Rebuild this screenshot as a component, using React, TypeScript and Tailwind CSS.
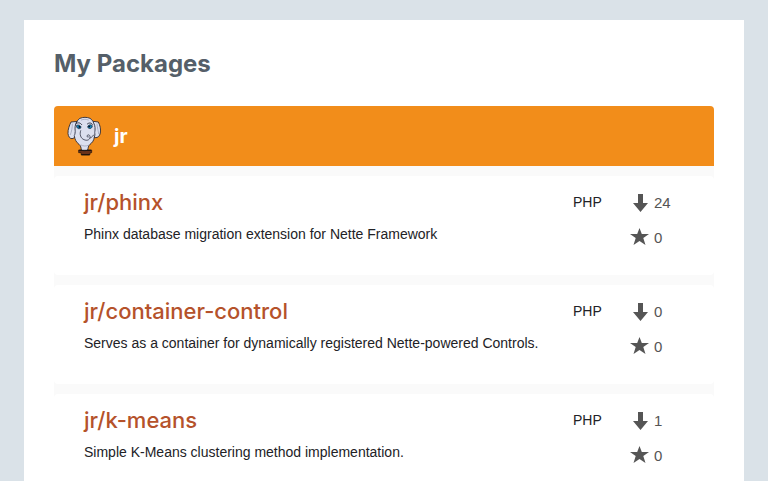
type Package = {
  name: string;
  description: string;
  language: string;
  downloads: number;
  stars: number;
};

const packages: Package[] = [
  { name: "jr/phinx", description: "Phinx database migration extension for Nette Framework", language: "PHP", downloads: 24, stars: 0 },
  { name: "jr/container-control", description: "Serves as a container for dynamically registered Nette-powered Controls.", language: "PHP", downloads: 0, stars: 0 },
  { name: "jr/k-means", description: "Simple K-Means clustering method implementation.", language: "PHP", downloads: 1, stars: 0 },
];

function Elephant() {
  return (
    <svg viewBox="48 48 108 120" className="h-10 w-9 shrink-0" role="img" aria-label="jr avatar">
      <path d="M86 150h39v8h-4l-2 7H94l-1-7h-7z" fill="#6b3219" stroke="#1c100c" strokeWidth="2" />
      <g fill="#dcdfef" stroke="#20212e" strokeWidth="2.5" strokeLinejoin="round" strokeLinecap="round">
        <path d="M84 64L63 66c-4 9-10 22-9 35 1 8 5 15 12 15 6-1 8-4 10-7z" />
        <path d="M122 63l23 3c5 10 8 21 6 33-2 9-7 15-16 14l-7-6z" />
        <path d="M80 66c3-5 6-9 10-11 9-4 21-4 30 0 5 3 9 8 11 14 5 9 5 19 3 28 0 5 1 8-1 14-1 10-6 17-13 22-6 5-5 11-7 17-5 3-14 3-19 0-1-7-1-12-7-17-8-6-13-15-14-26 1-4 3-8 3-13-2-10-1-20 4-28z" />
      </g>
      <g fill="none" stroke="#9297af" strokeWidth="2" strokeLinecap="round">
        <path d="M67 72c0 11-2 22-6 32M76 90c0 6-1 12-3 18M141 72c1 11 4 22 5 29M133 87c0 7 1 12 3 18" />
        <path d="M93 135c6 4 16 4 22 1M94 60c7-3 14-3 21 0" />
      </g>
      <path d="M92 92c-4 11 0 23 10 27 9 4 16 1 18-6 1-6-3-11-8-7-3 3 0 6 3 5M131 105c-4 5-7 8-11 9" fill="none" stroke="#3a3d4f" strokeWidth="2.5" strokeLinecap="round" />
      <path d="M77 72c7-6 14-4 19 3M111 73c5-5 12-6 17 1" fill="none" stroke="#20212e" strokeWidth="2.5" />
      <path d="M79 77c6-4 14-1 14 6-5 6-13 3-14-6zM113 82c0-7 9-10 14-5 0 8-8 12-14 5z" fill="#1582b8" stroke="#101c30" strokeWidth="2" />
      <path d="M86 78h5v5h-5zM115 77h5v5h-5z" fill="#09121e" />
      <path d="M88 151h35M94 164h25" stroke="#17100d" strokeWidth="3" />
    </svg>
  );
}

function DownloadIcon() {
  return (
    <svg viewBox="0 0 20 20" className="size-5 fill-[#555]" aria-hidden="true">
      <path d="M8 1h5v9h5l-7.5 9L3 10h5z" />
    </svg>
  );
}

function StarIcon() {
  return (
    <svg viewBox="0 0 20 20" className="size-5 fill-[#555]" aria-hidden="true">
      <path d="M9.5 0l2.3 6H19l-5.7 4.1 2.2 6.9-6-4.1-6 4.1 2.2-6.9L0 6h7.2z" />
    </svg>
  );
}

export default function App() {
  return (
    <div className="min-h-screen bg-[#dae2e8] px-6 pt-5 font-['Liberation_Sans',Arial,sans-serif] text-sm text-[#222226]">
      <main className="min-h-[calc(100vh-20px)] bg-white p-[30px]">
        <h1 className="mb-7 font-[Inter,sans-serif] text-2xl leading-7 font-bold text-[#555f69]">My Packages</h1>
        <section className="overflow-hidden rounded-t-[4px] bg-[#fafafa]">
          <header className="flex h-[60px] items-center gap-3 bg-[#f28d1a] px-3">
            <Elephant />
            <h2 className="font-[Inter,sans-serif] text-xl font-bold text-white">jr</h2>
          </header>
          <ul className="flex flex-col gap-2.5 pt-2.5">
            {packages.map((item) => (
              <li key={item.name} className="flex items-start rounded-[4px] bg-white px-[30px] pt-3 pb-[27px]">
                <div className="min-w-0 flex-1">
                  <h3 className="mb-2 font-[Inter,sans-serif] text-[22px] leading-7 font-medium">
                    <a href={"#" + item.name} className="text-[#b5522b]">{item.name}</a>
                  </h3>
                  <p className="leading-5">{item.description}</p>
                </div>
                <p className="ml-5 w-[57px] pt-1 leading-5">{item.language}</p>
                <div className="flex w-[54px] flex-col gap-[15px] pt-[5px] text-[15px] leading-5 text-[#555]">
                  <p className="flex items-center gap-1" aria-label="Downloads"><DownloadIcon />{item.downloads}</p>
                  <p className="flex items-center gap-1" aria-label="Stars"><StarIcon />{item.stars}</p>
                </div>
              </li>
            ))}
          </ul>
        </section>
      </main>
    </div>
  );
}
